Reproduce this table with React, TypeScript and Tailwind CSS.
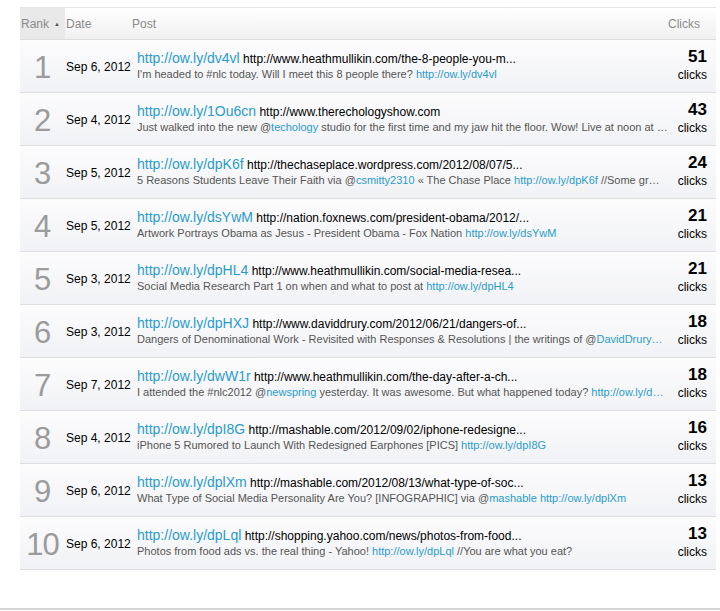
import React from "react";

type Seg = { t: string; l?: boolean };
type Row = { rank: number; date: string; short: string; url: string; desc: Seg[]; clicks: number };

const rows: Row[] = [
  { rank: 1, date: "Sep 6, 2012", short: "http://ow.ly/dv4vl", url: "http://www.heathmullikin.com/the-8-people-you-m...", desc: [{ t: "I'm headed to #nlc today. Will I meet this 8 people there? " }, { t: "http://ow.ly/dv4vl", l: true }], clicks: 51 },
  { rank: 2, date: "Sep 4, 2012", short: "http://ow.ly/1Ou6cn", url: "http://www.therechologyshow.com", desc: [{ t: "Just walked into the new @" }, { t: "techology", l: true }, { t: " studio for the first time and my jaw hit the floor. Wow! Live at noon at …" }], clicks: 43 },
  { rank: 3, date: "Sep 5, 2012", short: "http://ow.ly/dpK6f", url: "http://thechaseplace.wordpress.com/2012/08/07/5...", desc: [{ t: "5 Reasons Students Leave Their Faith via @" }, { t: "csmitty2310", l: true }, { t: " « The Chase Place " }, { t: "http://ow.ly/dpK6f", l: true }, { t: " //Some gr…" }], clicks: 24 },
  { rank: 4, date: "Sep 5, 2012", short: "http://ow.ly/dsYwM", url: "http://nation.foxnews.com/president-obama/2012/...", desc: [{ t: "Artwork Portrays Obama as Jesus - President Obama - Fox Nation " }, { t: "http://ow.ly/dsYwM", l: true }], clicks: 21 },
  { rank: 5, date: "Sep 3, 2012", short: "http://ow.ly/dpHL4", url: "http://www.heathmullikin.com/social-media-resea...", desc: [{ t: "Social Media Research Part 1 on when and what to post at " }, { t: "http://ow.ly/dpHL4", l: true }], clicks: 21 },
  { rank: 6, date: "Sep 3, 2012", short: "http://ow.ly/dpHXJ", url: "http://www.daviddrury.com/2012/06/21/dangers-of...", desc: [{ t: "Dangers of Denominational Work - Revisited with Responses & Resolutions | the writings of @" }, { t: "DavidDrury…", l: true }], clicks: 18 },
  { rank: 7, date: "Sep 7, 2012", short: "http://ow.ly/dwW1r", url: "http://www.heathmullikin.com/the-day-after-a-ch...", desc: [{ t: "I attended the #nlc2012 @" }, { t: "newspring", l: true }, { t: " yesterday. It was awesome. But what happened today? " }, { t: "http://ow.ly/d…", l: true }], clicks: 18 },
  { rank: 8, date: "Sep 4, 2012", short: "http://ow.ly/dpI8G", url: "http://mashable.com/2012/09/02/iphone-redesigne...", desc: [{ t: "iPhone 5 Rumored to Launch With Redesigned Earphones [PICS] " }, { t: "http://ow.ly/dpI8G", l: true }], clicks: 16 },
  { rank: 9, date: "Sep 6, 2012", short: "http://ow.ly/dplXm", url: "http://mashable.com/2012/08/13/what-type-of-soc...", desc: [{ t: "What Type of Social Media Personality Are You? [INFOGRAPHIC] via @" }, { t: "mashable", l: true }, { t: " " }, { t: "http://ow.ly/dplXm", l: true }], clicks: 13 },
  { rank: 10, date: "Sep 6, 2012", short: "http://ow.ly/dpLql", url: "http://shopping.yahoo.com/news/photos-from-food...", desc: [{ t: "Photos from food ads vs. the real thing - Yahoo! " }, { t: "http://ow.ly/dpLql", l: true }, { t: " //You are what you eat?" }], clicks: 13 },
];

export default function App() {
  return (
    <div className="w-[720px] h-[611px] bg-white flex flex-col overflow-hidden" style={{ fontFamily: '"Liberation Sans", Arial, sans-serif' }}>
      <div className="pt-[7px] pl-[20px] pr-[4px] flex-1">
        <div className="border-t border-[#e6e6e6]">
          <div className="flex h-[32px] bg-gradient-to-b from-white to-[#f0f0f0] border-b border-[#dcdcdc] text-[12px] text-[#8a8a8a] items-center">
            <div className="w-[45px] h-full bg-[#e9e9e9] flex items-center pl-[1px]">
              <span>Rank</span>
              <span className="ml-[5px] text-[6px] text-[#555] leading-none">▲</span>
            </div>
            <div className="w-[67px] pl-[1px]">Date</div>
            <div className="flex-1">Post</div>
            <div className="pr-[16px]">Clicks</div>
          </div>
          {rows.map((r) => (
            <div key={r.rank} className="flex h-[53px] items-center border-b border-[#dedede] bg-gradient-to-b from-[#fcfcfd] to-[#f1f2f5]">
              <div className={`w-[45px] text-center text-[#9b9b9b] text-[31px] leading-none pt-[2px] ${r.rank === 10 ? "tracking-[-1px]" : ""}`}>{r.rank}</div>
              <div className="w-[72px] pl-[1px] text-[12px] text-black pt-[1px] whitespace-nowrap">{r.date}</div>
              <div className="flex-1 min-w-0 whitespace-nowrap overflow-hidden pb-[1px]">
                <div className="leading-[16px]">
                  <span className="text-[14px] text-[#2a9ccb]">{r.short}</span>
                  <span className="text-[12px] text-black"> {r.url}</span>
                </div>
                <div className="text-[11px] leading-[14px] text-[#555]">
                  {r.desc.map((s, i) => (
                    <span key={i} className={s.l ? "text-[#2a9ccb]" : ""}>{s.t}</span>
                  ))}
                </div>
              </div>
              <div className="w-[46px] pr-[9px] text-right text-black">
                <div className="text-[17px] font-bold leading-[18px]">{r.clicks}</div>
                <div className="text-[12px] leading-[18px]">clicks</div>
              </div>
            </div>
          ))}
        </div>
      </div>
      <div className="h-[2px] bg-[#d4d4d4] mb-[1px]" />
    </div>
  );
}
